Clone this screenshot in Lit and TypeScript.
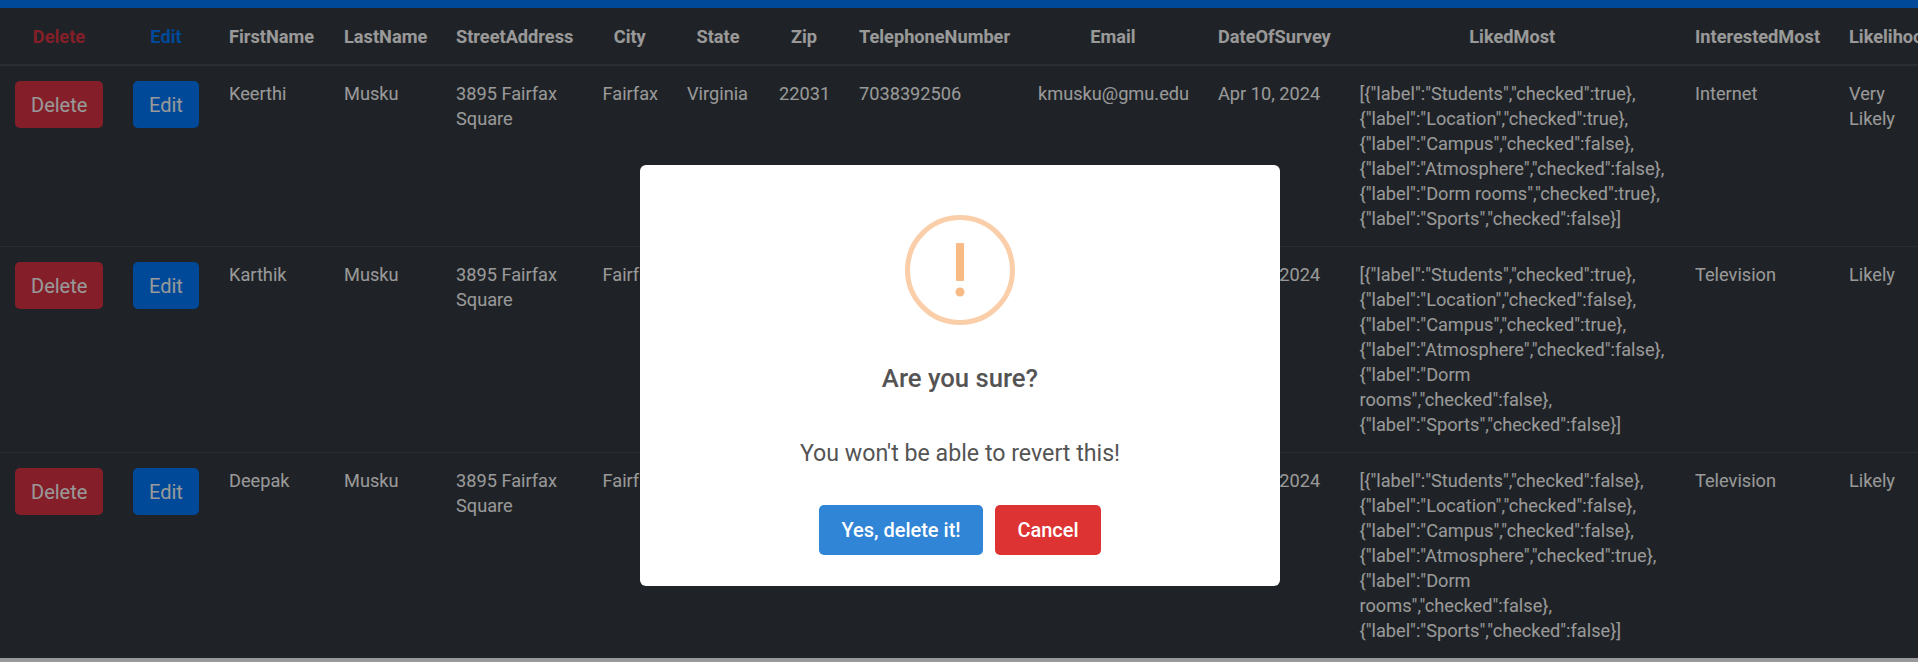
import { LitElement, html, css } from "lit";
import { customElement } from "lit/decorators.js";

const liked = (s: boolean[]) => {
  const labels = ["Students", "Location", "Campus", "Atmosphere", "Dorm rooms", "Sports"];
  return JSON.stringify(labels.map((label, i) => ({ label, checked: s[i] })));
};

const rows = [
  { first: "Keerthi", date: "Apr 10, 2024", liked: liked([true, true, false, false, true, false]), interest: "Internet", likelihood: "Very Likely" },
  { first: "Karthik", date: "Apr 10, 2024", liked: liked([true, false, true, false, false, false]), interest: "Television", likelihood: "Likely" },
  { first: "Deepak", date: "Apr 10, 2024", liked: liked([false, false, false, true, false, false]), interest: "Television", likelihood: "Likely" },
];

@customElement("app-root")
export class AppRoot extends LitElement {
  static styles = css`
    :host {
      display: block;
      position: relative;
      width: 1918px;
      height: 662px;
      overflow: hidden;
      background: #fff;
      font-family: Roboto, "Liberation Sans", sans-serif;
    }
    .bar { height: 8px; background: #007bff; }
    table {
      table-layout: fixed;
      border-collapse: collapse;
      width: 1934px;
      background: #343a40;
      color: #fff;
      font-size: 18.2px;
      line-height: 25px;
    }
    th, td { padding: 15px; vertical-align: top; text-align: left; }
    th {
      padding-top: 16px;
      font-weight: 700;
      text-align: center;
      white-space: nowrap;
      border-bottom: 2px solid #454d55;
    }
    th.start { text-align: left; }
    td { border-top: 1px solid #454d55; }
    tbody tr:first-child td { border-top: 0; }
    .red { color: #dc3545; }
    .blue { color: #007bff; }
    .btn {
      display: inline-block;
      padding: 7.5px 15px;
      border: 1px solid transparent;
      border-radius: 5px;
      font: 400 20px/30px Roboto, sans-serif;
      color: #fff;
    }
    .btn.del { background: #dc3545; }
    .btn.ed { background: #007bff; }
    .c1 { width: 118px; } .c2 { width: 96px; } .c3 { width: 115px; } .c4 { width: 112px; }
    .c5 { width: 146.5px; } .c6 { width: 84.5px; } .c7 { width: 92px; } .c8 { width: 80px; }
    .c9 { width: 179px; } .c10 { width: 180px; } .c11 { width: 141.5px; } .c12 { width: 335.5px; }
    .c13 { width: 154px; } .c14 { width: 100px; }
    .overlay {
      position: absolute;
      inset: 0;
      background: rgba(0, 0, 0, 0.4);
      display: flex;
      justify-content: center;
      align-items: flex-start;
      padding: 165px 0 0 2px;
      box-sizing: border-box;
    }
    .modal {
      width: 640px;
      height: 421px;
      box-sizing: border-box;
      background: #fff;
      border-radius: 6px;
      padding-top: 50px;
      display: flex;
      flex-direction: column;
      align-items: center;
      color: #545454;
    }
    .icon { width: 110px; height: 110px; display: block; }
    .title { margin-top: 35px; font-size: 25.7px; line-height: 36px; font-weight: 500; }
    .text { margin-top: 40px; font-size: 23.2px; line-height: 34px; }
    .actions { margin-top: 35px; display: flex; gap: 12px; }
    .action {
      height: 50px;
      padding: 0 22.4px;
      border-radius: 5px;
      display: flex;
      align-items: center;
      font-size: 20px;
      font-weight: 500;
      color: #fff;
    }
    .yes { background: #3085d6; }
    .no { background: #dd3333; }
  `;

  render() {
    const cols = Array.from({ length: 14 }, (_, i) => html`<col class="c${i + 1}" />`);
    return html`
      <div class="bar"></div>
      <table>
        <colgroup>${cols}</colgroup>
        <thead>
          <tr>
            <th class="red">Delete</th>
            <th class="blue">Edit</th>
            <th>FirstName</th>
            <th>LastName</th>
            <th>StreetAddress</th>
            <th>City</th>
            <th>State</th>
            <th>Zip</th>
            <th>TelephoneNumber</th>
            <th>Email</th>
            <th>DateOfSurvey</th>
            <th>LikedMost</th>
            <th>InterestedMost</th>
            <th class="start">Likelihood</th>
          </tr>
        </thead>
        <tbody>
          ${rows.map(
            (r) => html`
              <tr>
                <td><span class="btn del">Delete</span></td>
                <td><span class="btn ed">Edit</span></td>
                <td>${r.first}</td>
                <td>Musku</td>
                <td>3895 Fairfax Square</td>
                <td>Fairfax</td>
                <td>Virginia</td>
                <td>22031</td>
                <td>7038392506</td>
                <td>kmusku@gmu.edu</td>
                <td>${r.date}</td>
                <td>${r.liked}</td>
                <td>${r.interest}</td>
                <td>${r.likelihood}</td>
              </tr>
            `
          )}
        </tbody>
      </table>
      <div class="overlay">
        <div class="modal">
          <svg class="icon" viewBox="0 0 110 110" aria-hidden="true">
            <circle cx="55" cy="55" r="52.5" fill="none" stroke="#facea8" stroke-width="5"></circle>
            <rect x="51" y="28" width="8" height="38" rx="1" fill="#f8bb86"></rect>
            <circle cx="55" cy="77" r="4.5" fill="#f8bb86"></circle>
          </svg>
          <div class="title">Are you sure?</div>
          <div class="text">You won't be able to revert this!</div>
          <div class="actions">
            <div class="action yes">Yes, delete it!</div>
            <div class="action no">Cancel</div>
          </div>
        </div>
      </div>
    `;
  }
}
